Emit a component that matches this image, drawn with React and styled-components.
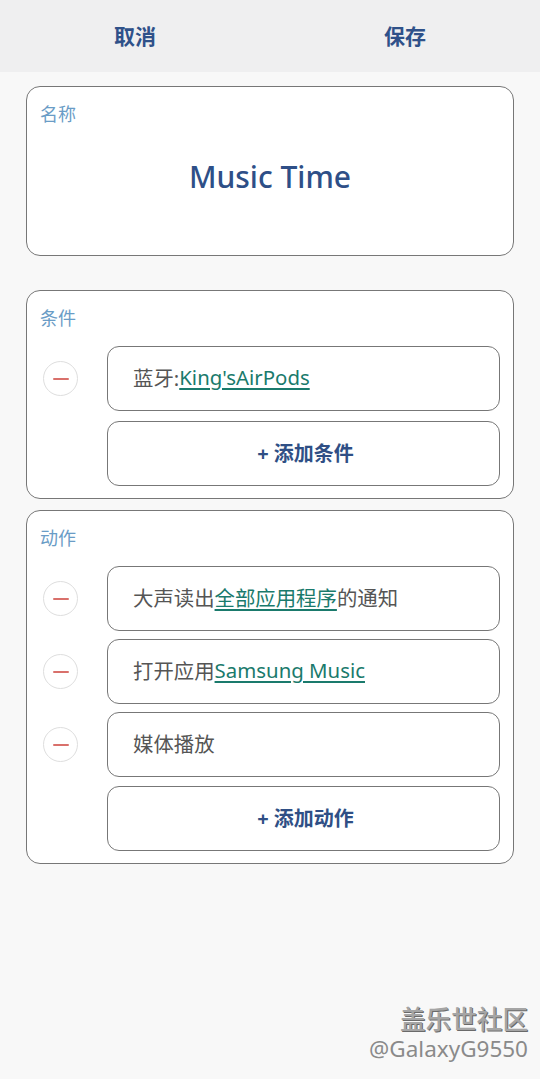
import React from 'react';
import styled, { createGlobalStyle } from 'styled-components';

const GlobalStyle = createGlobalStyle`
  html, body {
    margin: 0;
    padding: 0;
    background: #f8f8f8;
    font-family: "Noto Sans", "Noto Sans CJK SC", sans-serif;
  }
`;

const Page = styled.div`
  width: 540px;
  height: 1079px;
  background: #f8f8f8;
  position: relative;
  overflow: hidden;
`;

const Header = styled.header`
  height: 72px;
  background: #efeff0;
  display: grid;
  grid-template-columns: 1fr 1fr;
  align-items: center;
`;

const HeaderButton = styled.button`
  border: none;
  background: none;
  font-family: "Noto Sans CJK SC", sans-serif;
  font-size: 21px;
  font-weight: 700;
  color: #2f5189;
  padding: 0;
  margin-top: -2px;
`;

const Content = styled.main`
  padding: 14px 26px 0;
  display: flex;
  flex-direction: column;
`;

const Card = styled.section`
  background: #fff;
  border: 1px solid #777;
  border-radius: 14px;
  padding: 14px 13px 12px 0;
  margin-bottom: ${p => p.$gap || 11}px;
  min-height: ${p => p.$min || 0}px;
  box-sizing: border-box;
  display: flex;
  flex-direction: column;
`;

const Label = styled.div`
  font-family: "Noto Sans CJK SC", sans-serif;
  font-size: 18px;
  color: #6a9cc6;
  padding-left: 13px;
  line-height: 24px;
`;

const Title = styled.div`
  flex: 1;
  display: flex;
  align-items: center;
  justify-content: center;
  font-size: 30px;
  font-weight: 500;
  color: #2e4f87;
  padding-left: 13px;
  padding-bottom: 16px;
`;

const Rows = styled.div`
  margin-top: 17px;
  display: flex;
  flex-direction: column;
  gap: ${p => p.$gap || 8}px;
`;

const Row = styled.div`
  display: grid;
  grid-template-columns: 80px 1fr;
  align-items: center;
  margin-top: ${p => p.$push || 0}px;
`;

const Minus = styled.div`
  width: 33px;
  height: 33px;
  margin-left: 16px;
  border-radius: 50%;
  border: 1px solid #dedede;
  display: flex;
  align-items: center;
  justify-content: center;
  &::after {
    content: '';
    width: 16px;
    height: 2px;
    border-radius: 1px;
    background: #d9706b;
  }
`;

const Item = styled.div`
  grid-column: 2;
  height: 65px;
  box-sizing: border-box;
  border: 1px solid #777;
  border-radius: 12px;
  display: flex;
  align-items: center;
  justify-content: ${p => (p.$add ? 'center' : 'flex-start')};
  padding-left: ${p => (p.$add ? 4 : 25)}px;
  padding-bottom: 3px;
  font-family: "Noto Sans", "Noto Sans CJK SC", sans-serif;
  font-size: ${p => (p.$add ? 20 : 20.4)}px;
  font-weight: ${p => (p.$add ? 700 : 400)};
  color: ${p => (p.$add ? '#2f4f85' : '#555')};
`;

const LinkText = styled.span`
  color: #1a7a6c;
  text-decoration: underline;
  text-underline-offset: 3px;
`;

const Watermark = styled.div`
  position: absolute;
  right: 12px;
  bottom: 16px;
  text-align: right;
  color: #8a8a8a;
`;

const MarkTitle = styled.div`
  font-family: "Noto Sans CJK SC", sans-serif;
  font-size: 25.6px;
  font-weight: 500;
  color: #a5a5a5;
  text-shadow: 1px 1px 0 #6a6a6a;
  line-height: 34px;
`;

const MarkHandle = styled.div`
  font-family: "Noto Sans", sans-serif;
  font-size: 22.5px;
  color: #8a8a8a;
  line-height: 28px;
`;

const ActionRow = ({ children, push }) => (
  <Row $push={push}>
    <Minus />
    <Item>{children}</Item>
  </Row>
);

export default function App() {
  return (
    <Page>
      <GlobalStyle />
      <Header>
        <HeaderButton>取消</HeaderButton>
        <HeaderButton>保存</HeaderButton>
      </Header>
      <Content>
        <Card $gap={34} $min={170}>
          <Label>名称</Label>
          <Title>Music Time</Title>
        </Card>

        <Card>
          <Label>条件</Label>
          <Rows $gap={10}>
            <ActionRow>
              蓝牙:<LinkText>King'sAirPods</LinkText>
            </ActionRow>
            <Row>
              <Item $add>+ 添加条件</Item>
            </Row>
          </Rows>
        </Card>

        <Card>
          <Label>动作</Label>
          <Rows>
            <ActionRow>
              大声读出<LinkText>全部应用程序</LinkText>的通知
            </ActionRow>
            <ActionRow>
              打开应用<LinkText>Samsung Music</LinkText>
            </ActionRow>
            <ActionRow>媒体播放</ActionRow>
            <Row $push={1}>
              <Item $add>+ 添加动作</Item>
            </Row>
          </Rows>
        </Card>
      </Content>
      <Watermark>
        <MarkTitle>盖乐世社区</MarkTitle>
        <MarkHandle>@GalaxyG9550</MarkHandle>
      </Watermark>
    </Page>
  );
}
